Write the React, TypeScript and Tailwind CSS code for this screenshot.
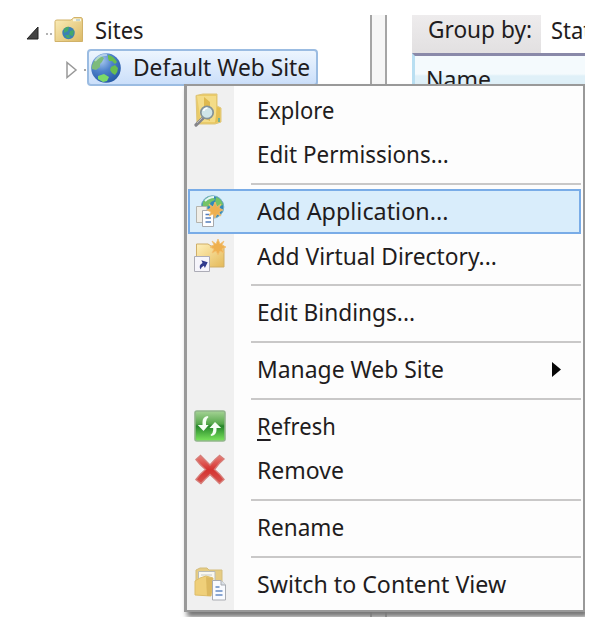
import type { ReactNode } from "react";

function SiteFolderIcon() {
  return (
    <svg width="30" height="28" viewBox="0 0 30 28" className="shrink-0">
      <defs>
        <linearGradient id="site-folder" x2="1" y2="1">
          <stop stopColor="#fbeebb" />
          <stop offset="1" stopColor="#dcb965" />
        </linearGradient>
      </defs>
      <path d="M1 5.5Q1 4 3 4H17L20 1.5H27Q28.5 1.5 28.5 4V25.5H1Z" fill="url(#site-folder)" stroke="#d1b269" />
      <path d="M19 4h8" stroke="#f9f6e4" strokeWidth="2.5" />
      <path d="M22 4h4" stroke="#8fb3bd" />
      <circle cx="14.5" cy="17" r="6.2" fill="#3b7fb4" />
      <path d="M10 13q3-3 5-2l-1 4-4 2zM16 15l4-1-1 6-4-1zM11 19l4 0 1 3-3 0z" fill="#45a86a" />
    </svg>
  );
}

function GlobeIcon() {
  return (
    <svg width="32" height="32" viewBox="0 0 32 32" className="shrink-0">
      <defs>
        <radialGradient id="globe" cx=".35" cy=".25" r=".8">
          <stop stopColor="#a9c9ee" />
          <stop offset=".45" stopColor="#4f83cc" />
          <stop offset="1" stopColor="#2458a4" />
        </radialGradient>
      </defs>
      <circle cx="16" cy="16" r="14.8" fill="url(#globe)" />
      <path d="M3 11Q6 5 11 4l3 2-2 4-2 2 0 3-4 3-4-1Q1 14 3 11Z" fill="#7dbb7c" />
      <path d="M18 3q6 1 9 7l-2 2-3-3-3 0-1-3zM21 15l4-2 3 3q0 4-3 7l-3-2-2-3z" fill="#68bd50" />
      <path d="M8 24l6-2 5 3-2 4-4 1-5-3z" fill="#7cda68" />
      <path d="M5 9Q10 2 17 3" stroke="#d8ecf3" strokeWidth="2" fill="none" opacity=".6" />
    </svg>
  );
}

function ExploreIcon() {
  return (
    <svg width="34" height="34" viewBox="0 0 34 34">
      <path d="M3 2.5 10 1H24V13L28 15V29L22 31H4Z" fill="#eacb68" stroke="#dfc578" />
      <path d="M4 3H23V29H8Z" fill="#f4dc87" />
      <path d="M11 4 17 9V28L11 25Z" fill="#dfb94e" />
      <path d="M24 14 27 15V27L22 30Z" fill="#e4bf53" />
      <path d="M26 25v4" stroke="#74b090" strokeWidth="2" />
      <path d="M10 25 3 32" stroke="#85858a" strokeWidth="3.2" strokeLinecap="round" />
      <path d="M10 24 4 30" stroke="#bfbdb5" strokeWidth="1" />
      <circle cx="14" cy="19.5" r="6.2" fill="#cfe5e9" stroke="#849297" strokeWidth="1.7" />
      <path d="M10.5 18q1-3 4-3" stroke="#fff" strokeWidth="1.7" fill="none" />
    </svg>
  );
}

function Sparkle({ x, y }: { x: number; y: number }) {
  return (
    <path
      transform={`translate(${x} ${y})`}
      d="M0-8 2-3 6-6 4-2 8 0 4 2 6 6 2 4 0 8-2 4-6 6-4 2-8 0-4-2-6-6-2-3Z"
      fill="#eeb050"
      stroke="#f3bf70"
      strokeWidth=".8"
    />
  );
}

function ApplicationIcon() {
  return (
    <svg width="34" height="34" viewBox="0 0 34 34">
      <circle cx="19.5" cy="13" r="11.3" fill="#3187bb" stroke="#7ab2c3" />
      <path d="M10 8q4-6 10-6l2 4-4 2-2 4-7 3zM23 3q6 2 7 8l-5 2-3-4z" fill="#74c366" />
      <path d="M12 7q4-4 9-4" stroke="#e2f4f6" strokeWidth="2" fill="none" />
      <path d="M3.5 12.5H14V28.5H3.5Z" fill="#f0eee7" stroke="#b5b4ae" />
      <path d="M9.5 16.5H17L20.5 20V32.5H9.5Z" fill="#fff" stroke="#a7a9ac" />
      <path d="M12.5 20.5h4M12.5 24h5.5M12.5 28h5.5" stroke="#537dbb" strokeWidth="1.5" />
      <Sparkle x={22} y={16} />
    </svg>
  );
}

function VirtualDirectoryIcon() {
  return (
    <svg width="34" height="34" viewBox="0 0 34 34">
      <defs>
        <linearGradient id="vdir" x2="1" y2="1">
          <stop stopColor="#fff0ba" />
          <stop offset="1" stopColor="#e4b958" />
        </linearGradient>
      </defs>
      <path d="M3.5 5H15L18 7H31V28H3.5Z" fill="url(#vdir)" stroke="#cfae68" />
      <Sparkle x={25} y={8} />
      <path d="M1.5 17.5h15v15h-15Z" fill="#f6f5fb" stroke="#acacb6" />
      <path d="M5.5 29Q5 24 10 24v-3l5 4.4-5 4V27q-3 0-4.5 2Z" fill="#303a8d" transform="rotate(-25 10 25)" />
    </svg>
  );
}

function RefreshIcon() {
  return (
    <svg width="34" height="34" viewBox="0 0 34 34">
      <defs>
        <linearGradient id="refresh" x2="0" y2="1">
          <stop stopColor="#a5d395" />
          <stop offset=".43" stopColor="#56a84b" />
          <stop offset=".5" stopColor="#25852a" />
          <stop offset="1" stopColor="#7ce65d" />
        </linearGradient>
      </defs>
      <rect x="2" y="2" width="30" height="30" rx="2" fill="url(#refresh)" stroke="#91b58b" strokeWidth="1.6" />
      <path d="M14.5 7Q9.5 8 9.5 13v3H4.8l5.7 6 5.2-6h-2.7v-3q0-3 2.5-5Z" fill="#f6fff5" />
      <path d="M18.5 27q5-1 5-6v-2h4.7L22 13l-5.5 6h3.7v2q0 3-2.7 5Z" fill="#f6fff5" />
    </svg>
  );
}

function RemoveIcon() {
  return (
    <svg width="34" height="34" viewBox="0 0 34 34">
      <defs>
        <linearGradient id="remove" x2="0" y2="1">
          <stop stopColor="#e77f78" />
          <stop offset=".5" stopColor="#d5322f" />
          <stop offset="1" stopColor="#d65550" />
        </linearGradient>
      </defs>
      <path
        d="M3 6.5 7.5 2.5Q12 7 17 12 22 6 26.500 2.500L31 6Q26 10 21.500 16.500 27 21 31 26.500L26.500 30.500Q22 26 17 21.500 12 26 8 30.500L3 26.500Q7 21 12.500 16.500 7 12 3 6.500Z"
        fill="url(#remove)"
        stroke="#d67d78"
        strokeWidth="1.4"
      />
    </svg>
  );
}

function ContentViewIcon() {
  return (
    <svg width="34" height="34" viewBox="0 0 34 34">
      <path d="M3 3 7 1H14L16 3H29V25H3Z" fill="#e6cc83" stroke="#d4bd7d" />
      <path d="M5.5 4.5H22V19H5.5Z" fill="#f9f8f0" stroke="#b8bbb7" />
      <path d="M8 8h11" stroke="#c6cac8" />
      <path d="M2 28V14L7 11 13 9 20 11 18 29Z" fill="#efcf79" stroke="#ddbd6a" />
      <path d="M13 10 20 11 18 29H14Z" fill="#dcb85f" />
      <path d="M19.5 13.5H28L32.5 18V33H19.5Z" fill="#f9fbff" stroke="#a9acb2" />
      <path d="M28 13.5V18h4.5" fill="#dae0e7" stroke="#a9acb2" />
      <path d="M22.5 20h4M22.5 24h7M22.5 28h7" stroke="#648bc3" strokeWidth="1.6" />
    </svg>
  );
}

type Item = { label: ReactNode; stretch: string; icon?: ReactNode; active?: boolean; submenu?: boolean };

const groups: Item[][] = [
  [
    { label: "Explore", stretch: "scale-x-[0.955]", icon: <ExploreIcon /> },
    { label: "Edit Permissions...", stretch: "scale-x-[0.975]" },
  ],
  [
    { label: "Add Application...", stretch: "scale-x-[1.015]", icon: <ApplicationIcon />, active: true },
    { label: "Add Virtual Directory...", stretch: "scale-x-[0.99]", icon: <VirtualDirectoryIcon /> },
  ],
  [{ label: "Edit Bindings...", stretch: "scale-x-[0.987]" }],
  [{ label: "Manage Web Site", stretch: "scale-x-[0.995]", submenu: true }],
  [
    {
      label: <><span className="underline decoration-2 underline-offset-4">R</span>efresh</>,
      stretch: "scale-x-[0.955]",
      icon: <RefreshIcon />,
    },
    { label: "Remove", stretch: "scale-x-100", icon: <RemoveIcon /> },
  ],
  [{ label: "Rename", stretch: "scale-x-[0.98]" }],
  [{ label: "Switch to Content View", stretch: "scale-x-[1.008]", icon: <ContentViewIcon /> }],
];

function MenuRow({ item }: { item: Item }) {
  return (
    <div
      className={`flex h-[44.4px] items-center border-2 pl-[3px] ${
        item.active ? "border-[#79ace7] bg-[#d9edfb]" : "border-transparent"
      }`}
    >
      <div className="w-[64px] shrink-0">{item.icon}</div>
      <span className={`origin-left whitespace-nowrap ${item.stretch}`}>{item.label}</span>
      {item.submenu && (
        <svg width="9" height="15" viewBox="0 0 9 15" className="mr-[18px] ml-auto">
          <path d="M0 0 9 7.5 0 15Z" fill="#080808" />
        </svg>
      )}
    </div>
  );
}

function ContextMenu() {
  return (
    <div className="absolute top-[69px] left-[184px] h-[528px] w-[401px] border-2 border-l-3 border-[#999] bg-[linear-gradient(90deg,#f0f0f0_47px,#fdfdfd_47px)] pt-[2px] pr-[2px] pl-px shadow-[3px_5px_5px_#777]">
      {groups.map((items, i) => (
        <div key={i}>
          {i > 0 && (
            <div className="flex h-[12.4px] items-center pt-[2px] pl-[63px]">
              <div className="h-[2px] w-full bg-[#c9c8c8]" />
            </div>
          )}
          {items.map((item, j) => (
            <MenuRow key={j} item={item} />
          ))}
        </div>
      ))}
    </div>
  );
}

function SiteTree() {
  return (
    <div className="w-[370px] shrink-0">
      <div className="flex h-[34px] items-center pb-[4px] pl-[26px]">
        <svg width="28" height="14" viewBox="0 0 28 14" className="relative top-[3px]">
          <path d="M12 1V13H1Z" fill="#444" stroke="#222" />
          <path d="M20 8h2M24 8h2" stroke="#999" strokeWidth="1.5" />
        </svg>
        <SiteFolderIcon />
        <span className="ml-[11px] origin-left scale-x-[0.955]">Sites</span>
      </div>
      <div className="flex h-[37px] items-center pl-[66px]">
        <svg width="21" height="18" viewBox="0 0 21 18" className="relative top-[2px]">
          <path d="M1 1.5V16.5L10 9Z" fill="#fff" stroke="#999" strokeWidth="1.5" />
          <path d="M18 9h2" stroke="#888" strokeWidth="1.5" />
        </svg>
        <div className="flex h-[37px] w-[231px] items-center rounded-[4px] border-2 border-[#9bbce2] bg-linear-to-b from-[#edf5fe] to-[#cbdffa] pl-px">
          <GlobeIcon />
          <span className="ml-[11px] origin-left scale-x-[0.99] whitespace-nowrap">Default Web Site</span>
        </div>
      </div>
    </div>
  );
}

function ContentPane() {
  return (
    <div className="ml-[25px] w-[173px] shrink-0 overflow-hidden">
      <div className="flex h-[38px] whitespace-nowrap">
        <div className="w-[129px] shrink-0 bg-linear-to-b from-[#eeeced] to-[#e2e0e1] pl-[16px] leading-[28px]">
          <div className="origin-left scale-x-[0.985]">Group by:</div>
        </div>
        <div className="pl-[10px] leading-[30px]">
          <div className="origin-left scale-x-[0.955]">Stat</div>
        </div>
      </div>
      <div className="h-[40px] border-t-3 border-l-3 border-t-[#8989a9] border-l-[#b9dff2] bg-[linear-gradient(#f4fafd_18px,#dff0f8_20px)] pl-[11px] leading-[46px]">
        <div className="origin-left scale-x-100">Name</div>
      </div>
    </div>
  );
}

export default function App() {
  return (
    <div className="h-[634px] w-[610px] overflow-hidden bg-white pt-[15px] font-['Noto_Sans','Open_Sans',sans-serif] text-[23px] text-[#1f1c20]">
      <div className="relative flex h-[602px] w-[585px] overflow-hidden">
        <SiteTree />
        <div className="w-[17px] shrink-0 border-x-2 border-[#a5a5a5] bg-[#f6f6f6]" />
        <ContentPane />
        <ContextMenu />
      </div>
    </div>
  );
}
